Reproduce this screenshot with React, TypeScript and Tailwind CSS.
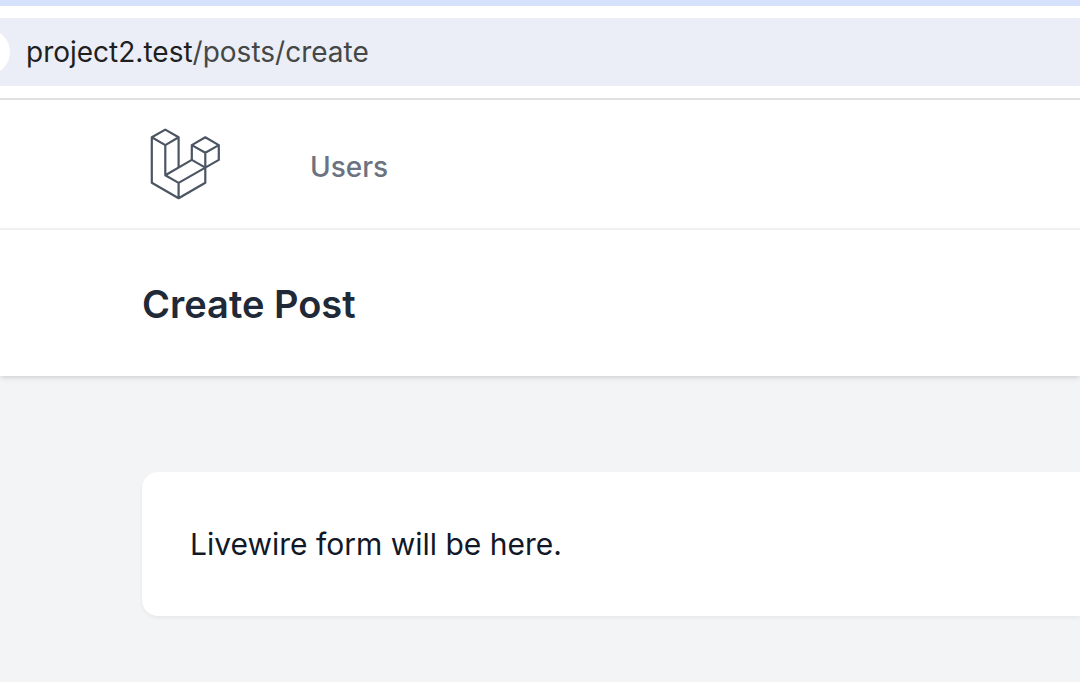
import React from "react";

function Logo() {
  return (
    <svg
      viewBox="142 124 80 80"
      className="size-20"
      fill="none"
      stroke="#4b5563"
      strokeWidth="2.2"
      strokeLinejoin="round"
      strokeLinecap="round"
      aria-hidden="true"
    >
      <path d="M151.8 137.3 165.3 129.6 178.6 137.3 165.3 145.1ZM151.8 137.3V182.8L178.6 198.2 205.3 182.8V167.6M165.3 145.1V175.2L178.6 182.9V198.2M178.6 137.3V167.6M165.3 175.2 191.8 159.9M178.6 182.9 205.3 167.6" />
      <path d="M191.8 145.1 205.3 137.3 218.8 145.1 205.3 152.8ZM191.8 145.1V159.9L205.3 167.6 218.8 159.9V145.1M205.3 152.8V167.6" />
    </svg>
  );
}

function AddressBar() {
  return (
    <div className="border-t-6 border-b-2 border-t-[#d6e2fb] border-b-[#e0e0e0] bg-white py-3">
      <div className="flex h-17 items-center gap-4 overflow-hidden bg-[#ebeef6]">
        <span className="-ml-9 size-[46px] shrink-0 rounded-full bg-white" />
        <div
          role="textbox"
          aria-label="Address"
          contentEditable
          suppressContentEditableWarning
          className="text-[28px] leading-9 whitespace-nowrap text-[#444746] outline-none"
        >
          <span className="text-[#1f1f1f]">project2.test</span>/posts/create
        </div>
      </div>
    </div>
  );
}

export default function App() {
  return (
    <div className="flex min-h-screen flex-col overflow-x-hidden bg-[#f3f4f6] font-['Inter','Liberation_Sans',sans-serif]">
      <AddressBar />
      <nav className="flex h-[130px] items-center gap-22 border-b-2 border-gray-100 bg-white pl-[142px]">
        <a href="#home" aria-label="Home">
          <Logo />
        </a>
        <a href="#users" className="pt-1.5 text-[28px] leading-10 font-medium text-[#6b7280]">
          Users
        </a>
      </nav>
      <header className="bg-white pt-[50px] pb-12 pl-[142px] shadow-[0_2px_6px_rgba(0,0,0,0.1),0_2px_4px_-2px_rgba(0,0,0,0.1)]">
        <h1 className="text-[38px] leading-12 font-semibold text-[#1f2937]">Create Post</h1>
      </header>
      <main className="py-24 pl-[142px]">
        <section className="rounded-l-2xl bg-white p-12 text-[30px] leading-12 text-[#111827] shadow-[0_2px_4px_rgba(0,0,0,0.05)]">
          Livewire form will be here.
        </section>
      </main>
    </div>
  );
}
